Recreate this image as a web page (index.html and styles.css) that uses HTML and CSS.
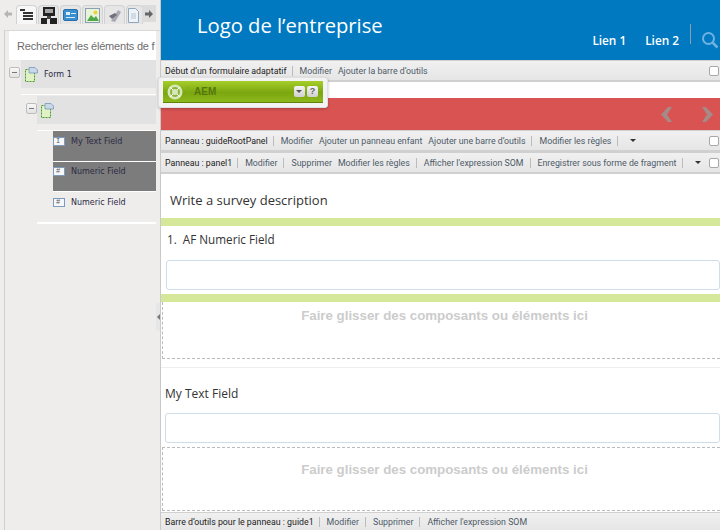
FILE: index.html
```html
<!DOCTYPE html>
<html lang="fr">
<head>
    <meta charset="UTF-8">
    <title>Formulaire adaptatif</title>
    <link rel="stylesheet" href="styles.css">
</head>
<body>
    <aside class="sidebar">
        <div class="tabs">
            <svg class="arrow" width="8" height="10" viewBox="0 0 8 10"><path d="M0 5l4-4v2.500h4v3H4V9z" fill="#b5b5b5"/></svg>
            <div class="tab tab-active">
                <svg width="13" height="12" viewBox="0 0 13 12"><path d="M0 0h5v2H0zM3 3h10v2H3zM3 6h10v2H3zM3 9h10v2H3z" fill="#333"/></svg>
            </div>
            <div class="tab">
                <svg width="16" height="17" viewBox="0 0 16 17"><path d="M2 0h12v9H2z" fill="#222"/><path d="M4 2h8v4H4z" fill="#a5a5a5"/><path d="M0 11h6v6H0zM9 11h7v6H9z" fill="#222"/><path d="M6 9h4v3H6z" fill="#444"/></svg>
            </div>
            <div class="tab">
                <svg width="15" height="14" viewBox="0 0 15 14"><rect x=".5" y="1.500" width="14" height="11" rx="1.500" fill="#3a8fd0" stroke="#2a6ea8"/><path d="M3 4h4v3H3zM8 5h5v1H8zM3 9h9v1H3z" fill="#d8ecfa"/></svg>
            </div>
            <div class="tab">
                <svg width="15" height="15" viewBox="0 0 15 15"><rect x=".5" y=".5" width="14" height="14" fill="#e8f3d8" stroke="#8aa0b0"/><path d="M2 13l4-6 3 3 2-2 3 5z" fill="#4fa84a"/><circle cx="10.500" cy="4.500" r="2" fill="#f0d040"/></svg>
            </div>
            <div class="tab">
                <svg width="14" height="15" viewBox="0 0 14 15"><path d="M3 13L10 2l3 2-6 10z" fill="#a9a9b4"/><path d="M1 8l6-3 2 2-5 4z" fill="#70707a"/></svg>
            </div>
            <div class="tab tab-last">
                <svg width="13" height="15" viewBox="0 0 13 15"><path d="M1.500.5h7l3 3v11h-10z" fill="#eef3f8" stroke="#8fa6bd"/><path d="M4 6h5M4 8h5M4 10h5" stroke="#b5c4d4"/></svg>
            </div>
            <div class="tab-next">
                <svg width="8" height="10" viewBox="0 0 8 10"><path d="M8 5L4 1v2.500H0v3h4V9z" fill="#666"/></svg>
            </div>
        </div>
        <div class="tree">
            <div class="search">Rechercher les éléments de f</div>
            <div class="node node-root">
                <span class="toggle"></span>
                <svg class="form-icon" width="13" height="15" viewBox="0 0 13 15"><rect x=".5" y="2.500" width="9" height="12" fill="#dff2c4" stroke="#4a9a2a" stroke-dasharray="2 1"/><path d="M4 .5h6l2.500 2.500v3H4z" fill="#c8d8ea" stroke="#6d8fb5" stroke-width=".7"/></svg>
                <span class="node-label">Form 1</span>
            </div>
            <div class="branch">
                <div class="node node-panel">
                    <span class="toggle"></span>
                    <svg class="form-icon" width="13" height="15" viewBox="0 0 13 15"><rect x=".5" y="2.500" width="9" height="12" fill="#dff2c4" stroke="#4a9a2a" stroke-dasharray="2 1"/><path d="M4 .5h6l2.500 2.500v3H4z" fill="#c8d8ea" stroke="#6d8fb5" stroke-width=".7"/></svg>
                </div>
                <div class="leaves">
                    <div class="leaf leaf-selected">
                        <span class="field-icon">I</span>
                        <span class="node-label">My Text Field</span>
                    </div>
                    <div class="leaf leaf-selected leaf-middle">
                        <span class="field-icon">#</span>
                        <span class="node-label">Numeric Field</span>
                    </div>
                    <div class="leaf">
                        <span class="field-icon">#</span>
                        <span class="node-label">Numeric Field</span>
                    </div>
                </div>
            </div>
            <span class="collapse-handle"></span>
        </div>
    </aside>

    <main class="page">
        <header class="site-header">
            <div class="logo">Logo de l’entreprise</div>
            <nav class="site-nav">
                <a>Lien 1</a>
                <a>Lien 2</a>
                <span class="nav-sep"></span>
                <svg width="18" height="18" viewBox="0 0 18 18"><circle cx="7.500" cy="7.500" r="5.500" fill="none" stroke="#6fb2e0" stroke-width="2"/><path d="M11.500 11.500L16.500 16.500" stroke="#6fb2e0" stroke-width="2.500"/></svg>
            </nav>
        </header>

        <div class="toolbar">
            <span class="tb-title">Début d’un formulaire adaptatif</span>
            <span class="tb-plain">Modifier</span>
            <span class="tb-plain">Ajouter la barre d’outils</span>
            <input class="tb-check" type="checkbox">
        </div>

        <div class="spacer"></div>
        <div class="banner">
            <svg width="11" height="15" viewBox="0 0 11 15"><path d="M7 0L0 7.500 7 15h4L6 7.500 11 0z" fill="#a58a86"/></svg>
            <svg width="11" height="15" viewBox="0 0 11 15"><path d="M4 0l7 7.500L4 15H0l5-7.500L0 0z" fill="#a58a86"/></svg>
        </div>

        <div class="toolbar">
            <span class="tb-title">Panneau : guideRootPanel</span>
            <span class="tb-plain">Modifier</span>
            <span class="tb-plain">Ajouter un panneau enfant</span>
            <span class="tb-item">Ajouter une barre d’outils</span>
            <span class="tb-item">Modifier les règles</span>
            <span class="tb-caret"></span>
            <input class="tb-check" type="checkbox">
        </div>
        <div class="toolbar">
            <span class="tb-title">Panneau : panel1</span>
            <span class="tb-item">Modifier</span>
            <span class="tb-plain">Supprimer</span>
            <span class="tb-item">Modifier les règles</span>
            <span class="tb-item">Afficher l'expression SOM</span>
            <span class="tb-item">Enregistrer sous forme de fragment</span>
            <span class="tb-caret"></span>
            <input class="tb-check" type="checkbox">
        </div>

        <section class="form-body">
            <h2 class="description">Write a survey description</h2>
            <div class="green-bar"></div>
            <div class="question">1.&nbsp; AF Numeric Field</div>
            <div class="text-input input-indent"></div>
            <div class="green-bar green-bar-low"></div>
            <div class="dropzone dropzone-first">Faire glisser des composants ou éléments ici</div>
            <hr class="divider">
            <div class="field-label">My Text Field</div>
            <div class="text-input"></div>
            <div class="dropzone dropzone-second">Faire glisser des composants ou éléments ici</div>
        </section>

        <div class="toolbar toolbar-bottom">
            <span class="tb-title">Barre d’outils pour le panneau : guide1</span>
            <span class="tb-item">Modifier</span>
            <span class="tb-item">Supprimer</span>
            <span class="tb-plain">Afficher l'expression SOM</span>
        </div>
    </main>

    <div class="aem-widget">
        <div class="aem-bar">
            <svg width="16" height="16" viewBox="0 0 16 16"><circle cx="8" cy="8" r="7.500" fill="#d5e8b8"/><circle cx="8" cy="8" r="4" fill="none" stroke="#8db33a" stroke-width="2"/><path d="M3 3l3 3M13 3l-3 3M3 13l3-3M13 13l-3-3" stroke="#fff"/></svg>
            <span class="aem-name">AEM</span>
            <span class="aem-btn aem-btn-caret"></span>
            <span class="aem-btn">?</span>
        </div>
    </div>
</body>
</html>
```

FILE: styles.css
```css
* {
    box-sizing: border-box;
}
body {
    margin: 0;
    height: 530px;
    overflow: hidden;
    display: flex;
    font-family: "Open Sans", sans-serif;
    background-color: #fff;
}

/* panneau de gauche */
.sidebar {
    width: 161px;
    flex-shrink: 0;
    background-color: #eeedec;
    border-right: 1px solid #c9c9c9;
}
.tabs {
    height: 28px;
    padding: 5px 0 0 4px;
    display: flex;
    align-items: flex-start;
}
.arrow {
    flex-shrink: 0;
    margin: 4px 4px 0 0;
}
.tab {
    width: 21px;
    height: 19px;
    margin-right: 1px;
    display: flex;
    align-items: center;
    justify-content: center;
    border: 1px solid #d2d2d2;
    border-bottom: none;
    border-radius: 4px 4px 0 0;
    background-color: #e6e6e6;
    flex-shrink: 0;
}
.tab-active {
    background-color: #f7f7f7;
}
.tab-last {
    width: 17px;
    margin-right: 0;
    justify-content: flex-start;
}
.tab-next {
    width: 14px;
    height: 17px;
    margin-left: -1px;
    display: flex;
    align-items: center;
    justify-content: center;
    background-color: #dcdcdc;
}
.tree {
    position: relative;
    height: 500px;
    margin: 2px 0 0 4px;
    padding: 0 4px;
    border-left: 1px solid #d0d0d0;
    border-top: 1px solid #d8d8d8;
}
.search {
    height: 29px;
    padding: 7px 0 0 8px;
    font-family: "Liberation Sans", sans-serif;
    font-size: 11px;
    letter-spacing: -0.2px;
    line-height: 16px;
    color: #6d6d6d;
    background-color: #fff;
    white-space: nowrap;
}
.node {
    display: flex;
    align-items: center;
    position: relative;
}
.node-root {
    height: 28px;
    margin-left: 12px;
    background-color: #e2e2e2;
}
.toggle {
    position: absolute;
    left: -12px;
    top: 7px;
    width: 11px;
    height: 11px;
    border: 1px solid #bdbdbd;
    border-radius: 2px;
    background: linear-gradient(#f8f8f8, #e2e2e2);
}
.toggle::after {
    content: "";
    position: absolute;
    left: 2px;
    right: 2px;
    top: 4px;
    height: 1px;
    background-color: #777;
}
.form-icon {
    margin-left: 4px;
    flex-shrink: 0;
}
.node-label {
    font-family: "DejaVu Sans", sans-serif;
    font-size: 8px;
    color: #2b2b45;
    white-space: nowrap;
}
.node-root .node-label {
    margin-left: 6px;
}
.branch {
    margin: 6px 0 0 12px;
    border-top: 1px solid #fff;
}
.node-panel {
    height: 28px;
    margin: 1px 0 0 16px;
    background-color: #e2e2e2;
}
.node-panel .toggle {
    left: -11px;
}
.leaves {
    margin: 6px 0 0 16px;
    padding-left: 16px;
    border-top: 1px solid #fff;
    border-bottom: 2px solid #fff;
}
.leaf {
    height: 30px;
    display: flex;
    align-items: flex-start;
    padding-top: 5px;
}
.leaf-selected {
    background-color: #7c7c7c;
    border-bottom: 1px solid #fff;
}
.leaf-selected:first-child {
    height: 31px;
}
.leaf-middle {
    padding-top: 4px;
}
.leaf .node-label {
    margin-left: 6px;
    line-height: 12px;
}
.field-icon {
    width: 12px;
    height: 9px;
    margin-top: 1px;
    background-color: #f5f7fa;
    border: 1px solid #7d9bbd;
    font-size: 7px;
    line-height: 7px;
    color: #555;
    padding-left: 2px;
    font-family: "Liberation Mono", monospace;
    flex-shrink: 0;
}
.collapse-handle {
    position: absolute;
    right: 0;
    top: 272px;
    width: 4px;
    height: 28px;
    background-color: #e6e6e6;
    border-radius: 3px 0 0 3px;
}
.collapse-handle::after {
    content: "";
    position: absolute;
    left: 1px;
    top: 11px;
    border: 3px solid transparent;
    border-left: none;
    border-right-color: #777;
}

/* contenu */
.page {
    flex: 1;
    min-width: 0;
    display: flex;
    flex-direction: column;
}
.site-header {
    height: 60px;
    flex-shrink: 0;
    background-color: #0079c1;
    display: flex;
    justify-content: space-between;
    color: #fff;
}
.logo {
    padding: 12px 0 0 36px;
    font-size: 20.200px;
    line-height: 27px;
}
.site-nav {
    display: flex;
    align-items: flex-end;
    padding-bottom: 8px;
    font-size: 11.800px;
    line-height: 16px;
    font-weight: 600;
}
.site-nav a {
    margin: 0 19px 4px 0;
}
.nav-sep {
    width: 1px;
    height: 20px;
    margin: 0 10px 8px -8px;
    background-color: #8d9fab;
}
.site-nav svg {
    margin: 0 1px 3px 0;
}
.toolbar {
    height: 22px;
    flex-shrink: 0;
    display: flex;
    align-items: center;
    padding-left: 4px;
    background: linear-gradient(#f0f0f0, #e6e6e6);
    border-top: 1px solid #d0d0d0;
    border-bottom: 2px solid #d0d0d0;
    font-family: Roboto, sans-serif;
    font-size: 8.800px;
    color: #4d5a68;
    white-space: nowrap;
    overflow: hidden;
}
.toolbar-bottom {
    height: 18px;
    border-bottom: none;
}
.tb-title {
    color: #222;
    padding-right: 5px;
    border-right: 1px solid #bcbcbc;
    margin-right: 7px;
}
.tb-item {
    padding-right: 6px;
    border-right: 1px solid #bcbcbc;
    margin-right: 7px;
}
.tb-plain {
    margin-right: 6px;
}
.tb-caret {
    width: 15px;
    height: 9px;
    position: relative;
}
.tb-caret::after {
    content: "";
    position: absolute;
    left: 5px;
    top: 3px;
    border: 3px solid transparent;
    border-bottom: none;
    border-top-color: #333;
}
.tb-check {
    margin: 0 1px 0 auto;
    width: 10px;
    height: 10px;
    appearance: none;
    background-color: #fff;
    border: 1px solid #a8a8a8;
    border-radius: 2px;
}
.spacer {
    height: 16px;
    flex-shrink: 0;
}
.banner {
    height: 32px;
    flex-shrink: 0;
    display: flex;
    justify-content: flex-end;
    align-items: center;
    gap: 30px;
    padding-right: 7px;
    background-color: #d95352;
}
.form-body {
    flex: 1;
    min-height: 0;
    overflow: hidden;
}
.description {
    margin: 0;
    padding: 17px 0 0 9px;
    height: 44px;
    font-size: 13px;
    font-weight: 400;
    line-height: 18px;
    color: #333;
}
.green-bar {
    height: 8px;
    background-color: #d5e89a;
}
.green-bar-low {
    margin-top: 4px;
}
.question {
    padding: 4px 0 0 6px;
    height: 34px;
    font-size: 11.700px;
    line-height: 18px;
    color: #333;
}
.text-input {
    height: 30px;
    margin-left: 4px;
    background-color: #fff;
    border: 1px solid #cfdde8;
    border-radius: 3px;
}
.input-indent {
    margin-left: 5px;
}
.dropzone {
    margin-left: 1px;
    padding-left: 6px;
    text-align: center;
    font-family: "Liberation Sans", sans-serif;
    font-size: 13.300px;
    font-weight: 700;
    line-height: 18px;
    color: #cccccc;
    border-left: 1px dashed #bbb;
    border-bottom: 1px dashed #bbb;
}
.dropzone-first {
    height: 57px;
    padding-top: 5px;
}
.dropzone-second {
    height: 64px;
    margin-top: 4px;
    padding-top: 13px;
    border-top: 1px dashed #bbb;
}
.divider {
    margin: 8px 0 0 0;
    border: none;
    border-top: 1px solid #eeeeee;
}
.field-label {
    padding: 17px 0 0 4px;
    height: 45px;
    font-size: 12px;
    line-height: 18px;
    color: #333;
}

/* barre flottante AEM */
.aem-widget {
    position: absolute;
    left: 158px;
    top: 77px;
    width: 170px;
    height: 31px;
    padding: 3px 4px;
    background-color: #f3f3f3;
    border: 1px solid #e0e0e0;
    border-radius: 3px;
    box-shadow: 0 1px 3px rgba(0, 0, 0, 0.25);
}
.aem-bar {
    height: 22px;
    display: flex;
    align-items: center;
    padding: 0 5px 0 4px;
    background: linear-gradient(#a6cf2a, #7ba60f 55%, #8cb81c);
    border-bottom: 1px solid #5f8208;
}
.aem-name {
    flex: 1;
    margin-left: 4px;
    padding-left: 6px;
    border-left: 1px solid #86ab1c;
    font-family: "Liberation Sans", sans-serif;
    font-size: 10px;
    font-weight: 700;
    color: #55780d;
}
.aem-btn {
    width: 11px;
    height: 11px;
    margin-left: 2px;
    position: relative;
    text-align: center;
    background: linear-gradient(#f4f4f4, #cfcfcf);
    border-radius: 2px;
    font-family: "Liberation Sans", sans-serif;
    font-size: 9px;
    font-weight: 700;
    line-height: 11px;
    color: #666;
}
.aem-btn-caret::after {
    content: "";
    position: absolute;
    left: 2px;
    top: 4px;
    border: 3.500px solid transparent;
    border-bottom: none;
    border-top-color: #555;
}
```
